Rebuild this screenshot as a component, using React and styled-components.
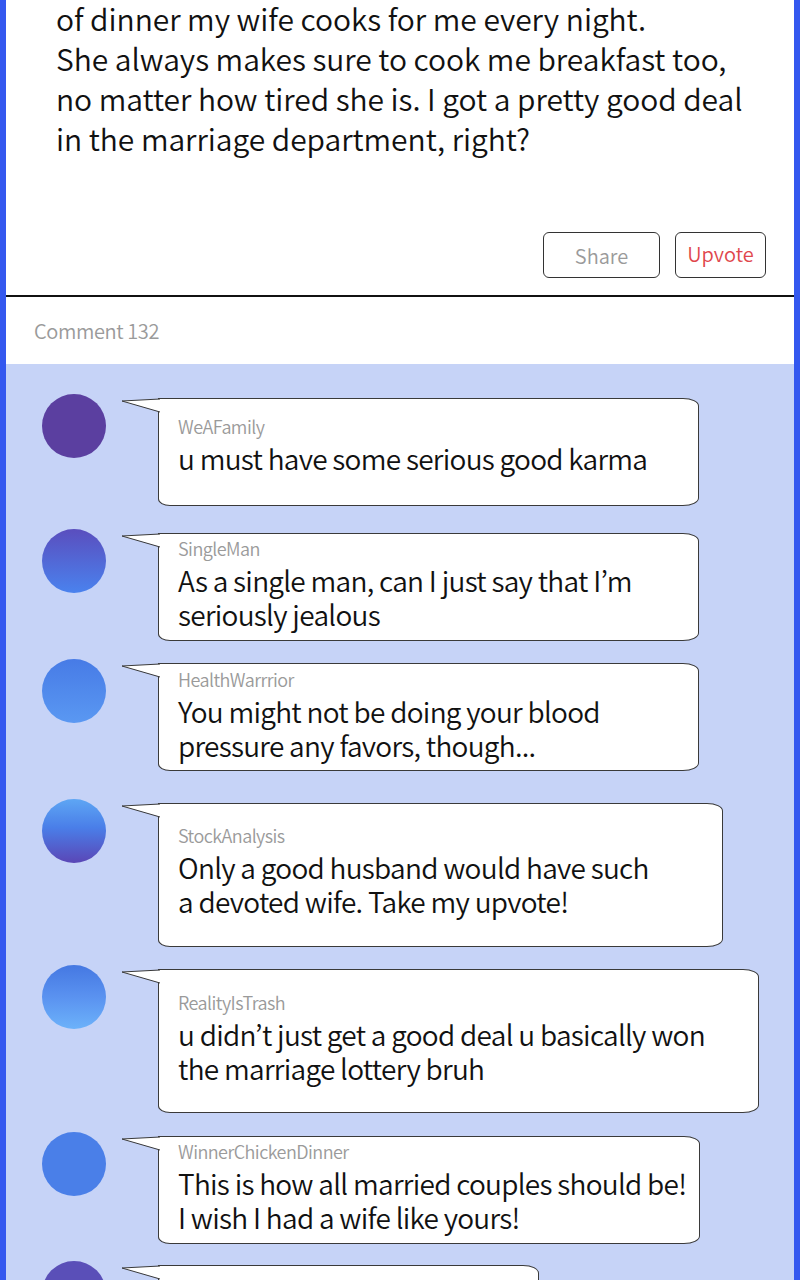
import React from 'react';
import styled, { createGlobalStyle } from 'styled-components';

const GlobalStyle = createGlobalStyle`
  html, body {
    margin: 0;
    padding: 0;
    background: #ffffff;
  }
  * {
    box-sizing: border-box;
  }
`;

const Frame = styled.div`
  width: 800px;
  height: 1280px;
  overflow: hidden;
  border-left: 6px solid #3458ef;
  border-right: 6px solid #3458ef;
  background: #ffffff;
  font-family: "Noto Sans CJK KR", "Noto Sans", sans-serif;
  font-weight: 350;
`;

const Post = styled.section`
  padding: 0 28px 0 50px;
`;

const PostText = styled.p`
  margin: -2px 0 0;
  font-size: 30px;
  line-height: 40px;
  color: #111111;
  letter-spacing: -0.05px;
  white-space: nowrap;
`;

const Actions = styled.div`
  display: flex;
  justify-content: flex-end;
  gap: 15px;
  margin: 74px -28px 0 -50px;
  padding: 0 28px 17px 0;
  border-bottom: 2px solid #111111;
`;

const Button = styled.button`
  width: ${(p) => p.$width}px;
  height: 46px;
  background: #ffffff;
  border: 1px solid #333333;
  border-radius: 6px;
  font-family: inherit;
  font-weight: 350;
  font-size: 20px;
  color: ${(p) => p.$color};
  cursor: pointer;
  padding: 0 0 ${(p) => p.$lift}px;
`;

const CommentHeader = styled.div`
  height: 67px;
  display: flex;
  align-items: center;
  padding-left: 28px;
  font-size: 20px;
  color: #9a9a9a;
  letter-spacing: -0.4px;
`;

const CommentList = styled.div`
  background: #c6d3f7;
  padding: 30px 0 0 36px;
  min-height: 920px;
`;

const Row = styled.div`
  display: flex;
  align-items: flex-start;
  gap: 16px;
  margin-top: ${(p) => p.$space}px;
`;

const Avatar = styled.div`
  flex: none;
  width: 64px;
  height: 64px;
  border-radius: 50%;
  background: ${(p) => p.$fill};
`;

const Bubble = styled.div`
  position: relative;
  margin: 4px 0 0 36px;
  width: ${(p) => p.$width}px;
  padding: ${(p) => p.$pt}px 19px ${(p) => p.$pb}px 19px;
  background: #ffffff;
  border: 1px solid #3a3a3a;
  border-radius: 0 16px 16px 12px / 0 8px 8px 7px;
`;

const Tail = styled.svg`
  position: absolute;
  left: -37px;
  top: -1px;
  width: 39px;
  height: 15px;
  overflow: visible;
`;

const Username = styled.div`
  font-size: 18px;
  line-height: 24px;
  color: #9a9a9a;
  letter-spacing: -0.55px;
  margin-bottom: 3px;
  white-space: nowrap;
`;

const Message = styled.div`
  font-size: 28px;
  line-height: 34px;
  color: #111111;
  letter-spacing: -0.72px;
  white-space: nowrap;
`;

const comments = [
  {
    name: 'WeAFamily',
    lines: ['u must have some serious good karma'],
    fill: '#5b3fa0',
    width: 541,
    pt: 15,
    pb: 30,
    space: 0,
  },
  {
    name: 'SingleMan',
    lines: ['As a single man, can I just say that I’m', 'seriously jealous'],
    fill: 'linear-gradient(180deg, #5a4ebe 0%, #4a82ee 100%)',
    width: 541,
    pt: 2,
    pb: 9,
    space: 23,
  },
  {
    name: 'HealthWarrrior',
    lines: ['You might not be doing your blood', 'pressure any favors, though...'],
    fill: 'linear-gradient(180deg, #477be6 0%, #5a98f2 100%)',
    width: 541,
    pt: 3,
    pb: 8,
    space: 18,
  },
  {
    name: 'StockAnalysis',
    lines: ['Only a good husband would have such', 'a devoted wife. Take my upvote!'],
    fill: 'linear-gradient(180deg, #5ea6f4 0%, #4a7ee8 45%, #5a46b6 100%)',
    width: 565,
    pt: 19,
    pb: 28,
    space: 28,
  },
  {
    name: 'RealityIsTrash',
    lines: ['u didn’t just get a good deal u basically won', 'the marriage lottery bruh'],
    fill: 'linear-gradient(180deg, #4578e2 0%, #5a92f0 50%, #6cb2fa 100%)',
    width: 601,
    pt: 20,
    pb: 27,
    space: 18,
  },
  {
    name: 'WinnerChickenDinner',
    lines: ['This is how all married couples should be!', 'I wish I had a wife like yours!'],
    fill: '#4a7fe8',
    width: 542,
    pt: 2,
    pb: 9,
    space: 19,
  },
  {
    name: 'HappyWife',
    lines: ['So sweet!'],
    fill: '#5a4fb8',
    width: 381,
    pt: 22,
    pb: 28,
    space: 17,
  },
];

function Comment({ c }) {
  return (
    <Row $space={c.space}>
      <Avatar $fill={c.fill} />
      <Bubble $width={c.width} $pt={c.pt} $pb={c.pb}>
        <Tail viewBox="0 0 39 15">
          <polygon points="0,3 39,1 39,14" fill="#ffffff" />
          <polyline points="38,1 0,3 38,14" fill="none" stroke="#3a3a3a" strokeWidth="1" />
        </Tail>
        <Username>{c.name}</Username>
        <Message>
          {c.lines.map((l, i) => (
            <div key={i}>{l}</div>
          ))}
        </Message>
      </Bubble>
    </Row>
  );
}

export default function App() {
  return (
    <>
      <GlobalStyle />
      <Frame>
        <Post>
          <PostText>
            of dinner my wife cooks for me every night.
            <br />
            She always makes sure to cook me breakfast too,
            <br />
            no matter how tired she is. I got a pretty good deal
            <br />
            in the marriage department, right?
          </PostText>
          <Actions>
            <Button $width={117} $lift={0} $color="#9a9a9a">Share</Button>
            <Button $width={91} $lift={4} $color="#e0474c">Upvote</Button>
          </Actions>
        </Post>
        <CommentHeader>Comment 132</CommentHeader>
        <CommentList>
          {comments.map((c) => (
            <Comment key={c.name} c={c} />
          ))}
        </CommentList>
      </Frame>
    </>
  );
}
